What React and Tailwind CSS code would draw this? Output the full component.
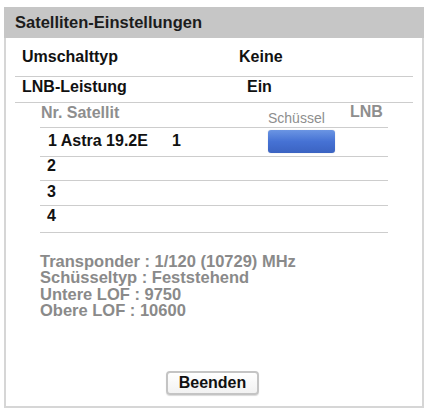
export default function App() {
  const font = { fontFamily: '"Liberation Sans", Arial, sans-serif' };
  const rows = [
    { nr: "2", h: "h-[24px]", pt: "pt-0" },
    { nr: "3", h: "h-[25px]", pt: "pt-[2px]" },
    { nr: "4", h: "h-[27px]", pt: "pt-px" },
  ];

  return (
    <div className="w-[428px] h-[410px] bg-white pt-[7px] font-['Liberation_Sans',Arial,sans-serif]">
      <div className="ml-[4px] w-[420px]">
        {/* header */}
        <div className="h-[31px] bg-[#c6c6c6] flex items-center pl-[11px]">
          <span className="text-[16.5px] font-bold text-[#1c1c1c] leading-none">Satelliten-Einstellungen</span>
        </div>

        <div className="h-[370px] border-x-2 border-b-2 border-[#d6d6d6] pt-[5px] flex flex-col">
          {/* top settings */}
          <div className="mx-[9px]">
            <div className="h-[28px] box-content border-b border-[#cdcdcd] pt-[5px] pl-[7px] flex text-[16px] font-bold leading-[18px] text-[#111]">
              <span className="w-[217px]">Umschalttyp</span>
              <span>Keine</span>
            </div>
            <div className="h-[24px] box-content border-b border-[#cdcdcd] pt-px pl-[7px] flex text-[16px] font-bold leading-[18px] text-[#111]">
              <span className="w-[225px]">LNB-Leistung</span>
              <span>Ein</span>
            </div>
          </div>

          {/* satellite table */}
          <div className="mx-[34px]">
            <div className="h-[25px] border-b border-[#cdcdcd] flex text-[#8e8e8e]">
              <span className="w-[228px] pl-px pt-px text-[16px] font-bold leading-[18px]">Nr. Satellit</span>
              <span className="w-[82px] pt-[7px] text-[14px] leading-[16px]">Schüssel</span>
              <span className="text-[16px] font-bold leading-[18px]">LNB</span>
            </div>
            <div className="h-[29px] border-b border-[#cdcdcd] flex text-[16px] font-bold leading-[18px] text-[#111]">
              <span className="w-[132px] pl-[8px] pt-[4px]">1 Astra 19.2E</span>
              <span className="w-[96px] pt-[4px]">1</span>
              <div className="mt-[2px] w-[67px] h-[23px] rounded-[3px] bg-gradient-to-b from-[#6b95e3] via-[#4672d4] to-[#3b63c2] shadow-[0_0_1px_rgba(0,0,0,0.3)]" />
            </div>
            {rows.map((r) => (
              <div key={r.nr} className={`${r.h} border-b border-[#cdcdcd] flex text-[16px] font-bold leading-[18px] text-[#111]`}>
                <span className={`pl-[7px] ${r.pt}`}>{r.nr}</span>
              </div>
            ))}
          </div>

          {/* info */}
          <div className="mx-[34px] mt-[20px] text-[16.5px] font-bold leading-[16px] text-[#8a8a8a]">
            <div>Transponder : 1/120 (10729) MHz</div>
            <div>Schüsseltyp : Feststehend</div>
            <div className="mt-px">Untere LOF : 9750</div>
            <div>Obere LOF : 10600</div>
          </div>

          <div className="mt-[53px] flex pl-[160px]">
            <button style={font} className="w-[93px] h-[24px] border-2 border-[#c4c4c4] rounded-[4px] bg-gradient-to-b from-white to-[#f2f2f2] shadow-[0_1px_1px_rgba(0,0,0,0.15)] text-[16px] font-bold text-[#111] leading-none">
              Beenden
            </button>
          </div>
        </div>
      </div>
    </div>
  );
}
